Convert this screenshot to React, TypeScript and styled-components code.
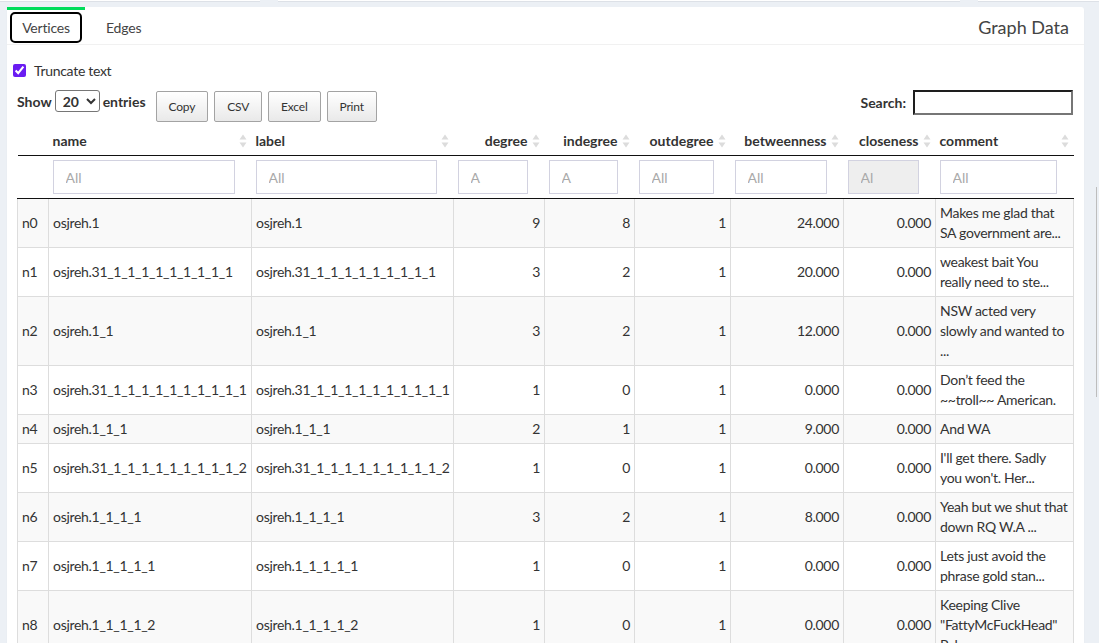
import React from "react";
import styled, { createGlobalStyle } from "styled-components";

const FONT = `"Lato", "Noto Sans", sans-serif`;

const GlobalStyle = createGlobalStyle`
  html, body { margin: 0; padding: 0; }
  body {
    background: #ecf0f5;
    font-family: ${FONT};
    font-size: 14px;
    color: #333;
    overflow: hidden;
  }
`;

const Page = styled.div`
  display: flex;
  flex-direction: column;
`;

const TopStrip = styled.div`
  display: flex;
  gap: 18px;
  height: 2px;
`;

const StripPiece = styled.div<{ $w?: number }>`
  background: #fff;
  border-bottom: 1px solid #dde1e7;
  box-sizing: border-box;
  ${(p) => (p.$w ? `width: ${p.$w}px;` : "flex: 1;")}
`;

const Card = styled.div`
  margin: 5px 15px 0 7px;
  background: #fff;
  border-radius: 3px;
  box-shadow: 0 1px 1px rgba(0, 0, 0, 0.08);
`;

const CardHeader = styled.div`
  display: flex;
  align-items: stretch;
  justify-content: space-between;
  height: 37px;
  border-bottom: 1px solid #f1f1f1;
`;

const Tabs = styled.div`
  display: flex;
`;

const Tab = styled.div<{ $active?: boolean }>`
  width: ${(p) => (p.$active ? "78px" : "auto")};
  flex: none;
  box-sizing: border-box;
  border-top: 3px solid ${(p) => (p.$active ? "#00dc5a" : "transparent")};
  display: flex;
`;

const TabLink = styled.div<{ $active?: boolean }>`
  margin: 2px 3px 0 3px;
  height: 31px;
  box-sizing: border-box;
  flex: 1;
  display: flex;
  align-items: center;
  justify-content: center;
  padding: ${(p) => (p.$active ? "0" : "0 16px")};
  border: 2px solid ${(p) => (p.$active ? "#000" : "transparent")};
  border-radius: 5px;
  color: #444;
  font-size: 14px;
  letter-spacing: -0.2px;
  white-space: nowrap;
`;

const Title = styled.div`
  align-self: center;
  font-size: 18px;
  color: #444;
  padding-right: 15px;
  padding-top: 2px;
`;

const CardBody = styled.div`
  padding: 10px 10px 0 10px;
`;

const CheckRow = styled.label`
  display: flex;
  align-items: center;
  height: 20px;
  margin-top: 5px;
  color: #333;
  letter-spacing: -0.3px;
`;

const Check = styled.input`
  width: 13px;
  height: 13px;
  margin: 0 8px 0 -4px;
  accent-color: #6a1cf2;
`;

const Controls = styled.div`
  display: flex;
  align-items: flex-start;
  margin-top: 8px;
  height: 34px;
`;

const LengthLabel = styled.label`
  display: flex;
  align-items: center;
  gap: 3px;
  margin-top: 2px;
  font-weight: 700;
  color: #333;
`;

const Select = styled.select`
  width: 45px;
  height: 22px;
  font-family: ${FONT};
  font-size: 14px;
  font-weight: 700;
  color: #333;
  border: 1px solid #767676;
  border-radius: 3px;
  background: #fff;
  padding: 0 0 0 3px;
`;

const Buttons = styled.div`
  display: flex;
  gap: 6px;
  margin: 3px 0 0 10px;
`;

const Button = styled.button`
  height: 31px;
  padding: 0 12px;
  font-family: ${FONT};
  font-size: 12px;
  letter-spacing: -0.2px;
  color: #333;
  border: 1px solid #a3a3a3;
  border-radius: 2px;
  background: linear-gradient(to bottom, #ffffff 0%, #e9e9e9 100%);
`;

const Spacer = styled.div`
  flex: 1;
`;

const SearchLabel = styled.label`
  display: flex;
  align-items: center;
  gap: 7px;
  margin-top: 2px;
  font-weight: 700;
  color: #333;
`;

const SearchInput = styled.input`
  width: 160px;
  height: 25px;
  box-sizing: border-box;
  border: 2px solid #767676;
  border-top-color: #1e1e1e;
  border-left-color: #1e1e1e;
  margin-right: 1px;
  background: #fff;
`;

const Table = styled.table`
  margin-top: 5px;
  width: 1056px;
  table-layout: fixed;
  border-collapse: collapse;
  font-size: 14px;
  color: #333;
`;

const HeadCell = styled.th<{ $num?: boolean }>`
  position: relative;
  text-align: ${(p) => (p.$num ? "right" : "left")};
  font-weight: 700;
  padding: 4px 17px 4px 4px;
  line-height: 20px;
  border-bottom: 1px solid #111;
  white-space: nowrap;
`;

const FilterCell = styled.th`
  padding: 4px 17px 4px 4px;
  border-bottom: 1px solid #111;
  font-weight: 400;
`;

const FilterInput = styled.input`
  width: 100%;
  height: 34px;
  box-sizing: border-box;
  border: 1px solid #d2d2e0;
  padding: 0 0 0 12px;
  font-family: ${FONT};
  font-size: 14px;
  color: #555;
  background: #fff;
  &::placeholder { color: #a9a9a9; }
  &:disabled { background: #eeeeee; }
`;

const SortIcon = styled.svg`
  position: absolute;
  right: 5px;
  top: 50%;
  margin-top: -7px;
  width: 8px;
  height: 14px;
`;

const Row = styled.tr<{ $odd?: boolean }>`
  background: ${(p) => (p.$odd ? "#f9f9f9" : "#fff")};
`;

const Cell = styled.td<{ $num?: boolean }>`
  border: 1px solid #ddd;
  padding: 4px;
  line-height: 20px;
  vertical-align: middle;
  text-align: ${(p) => (p.$num ? "right" : "left")};
  white-space: nowrap;
  overflow: hidden;
  letter-spacing: -0.3px;
`;

const Line = styled.span`
  display: block;
`;

const ScrollThumb = styled.div`
  position: fixed;
  right: 2px;
  top: 187px;
  width: 1px;
  height: 210px;
  background: #bdbdbd;
`;

const cols = [31, 203, 202, 91, 90, 96, 113, 92, 138];

const headers: { label: string; num?: boolean; sort?: boolean }[] = [
  { label: "" },
  { label: "name", sort: true },
  { label: "label", sort: true },
  { label: "degree", num: true, sort: true },
  { label: "indegree", num: true, sort: true },
  { label: "outdegree", num: true, sort: true },
  { label: "betweenness", num: true, sort: true },
  { label: "closeness", num: true, sort: true },
  { label: "comment", sort: true },
];

const filters: (string | null)[] = [null, "All", "All", "A", "A", "All", "All", "Al", "All"];

const r31 = "osjreh.31" + "_1".repeat(9);

const rows = [
  { id: "n0", name: "osjreh.1", d: 9, i: 8, o: 1, b: "24.000", c: "0.000", com: ["Makes me glad that", "SA government are..."] },
  { id: "n1", name: r31, d: 3, i: 2, o: 1, b: "20.000", c: "0.000", com: ["weakest bait You", "really need to ste..."] },
  { id: "n2", name: "osjreh.1_1", d: 3, i: 2, o: 1, b: "12.000", c: "0.000", com: ["NSW acted very", "slowly and wanted to", "..."] },
  { id: "n3", name: r31 + "_1", d: 1, i: 0, o: 1, b: "0.000", c: "0.000", com: ["Don’t feed the", "~~troll~~ American."] },
  { id: "n4", name: "osjreh.1_1_1", d: 2, i: 1, o: 1, b: "9.000", c: "0.000", com: ["And WA"] },
  { id: "n5", name: r31 + "_2", d: 1, i: 0, o: 1, b: "0.000", c: "0.000", com: ["I'll get there. Sadly", "you won't. Her..."] },
  { id: "n6", name: "osjreh.1_1_1_1", d: 3, i: 2, o: 1, b: "8.000", c: "0.000", com: ["Yeah but we shut that", "down RQ W.A ..."] },
  { id: "n7", name: "osjreh.1_1_1_1_1", d: 1, i: 0, o: 1, b: "0.000", c: "0.000", com: ["Lets just avoid the", "phrase gold stan..."] },
  { id: "n8", name: "osjreh.1_1_1_1_2", d: 1, i: 0, o: 1, b: "0.000", c: "0.000", com: ["Keeping Clive", "\"FattyMcFuckHead\"", "Pal..."] },
];

const Sort = () => (
  <SortIcon viewBox="0 0 8 14">
    <path d="M4 0.5 L7.5 5.5 L0.5 5.5 Z" fill="#dcdcdc" />
    <path d="M4 13.5 L7.5 8.5 L0.5 8.5 Z" fill="#dcdcdc" />
  </SortIcon>
);

export default function App() {
  return (
    <Page>
      <GlobalStyle />
      <TopStrip>
        <StripPiece $w={260} />
        <StripPiece />
        <StripPiece $w={121} />
      </TopStrip>
      <Card>
        <CardHeader>
          <Tabs>
            <Tab $active>
              <TabLink $active>Vertices</TabLink>
            </Tab>
            <Tab>
              <TabLink>Edges</TabLink>
            </Tab>
          </Tabs>
          <Title>Graph Data</Title>
        </CardHeader>
        <CardBody>
          <CheckRow>
            <Check type="checkbox" defaultChecked />
            Truncate text
          </CheckRow>
          <Controls>
            <LengthLabel>
              Show
              <Select defaultValue="20">
                <option value="10">10</option>
                <option value="20">20</option>
                <option value="50">50</option>
              </Select>
              entries
            </LengthLabel>
            <Buttons>
              <Button>Copy</Button>
              <Button>CSV</Button>
              <Button>Excel</Button>
              <Button>Print</Button>
            </Buttons>
            <Spacer />
            <SearchLabel>
              Search:
              <SearchInput type="search" />
            </SearchLabel>
          </Controls>
          <Table>
            <colgroup>
              {cols.map((w, k) => (
                <col key={k} style={{ width: w }} />
              ))}
            </colgroup>
            <thead>
              <tr>
                {headers.map((h, k) => (
                  <HeadCell key={k} $num={h.num}>
                    {h.label}
                    {h.sort && <Sort />}
                  </HeadCell>
                ))}
              </tr>
              <tr>
                {filters.map((f, k) => (
                  <FilterCell key={k}>
                    {f !== null && (
                      <FilterInput type="search" placeholder={f} disabled={k === 7} />
                    )}
                  </FilterCell>
                ))}
              </tr>
            </thead>
            <tbody>
              {rows.map((r, k) => (
                <Row key={r.id} $odd={k % 2 === 0}>
                  <Cell>{r.id}</Cell>
                  <Cell>{r.name}</Cell>
                  <Cell>{r.name}</Cell>
                  <Cell $num>{r.d}</Cell>
                  <Cell $num>{r.i}</Cell>
                  <Cell $num>{r.o}</Cell>
                  <Cell $num>{r.b}</Cell>
                  <Cell $num>{r.c}</Cell>
                  <Cell>
                    {r.com.map((l, j) => (
                      <Line key={j}>{l}</Line>
                    ))}
                  </Cell>
                </Row>
              ))}
            </tbody>
          </Table>
        </CardBody>
      </Card>
      <ScrollThumb />
    </Page>
  );
}
